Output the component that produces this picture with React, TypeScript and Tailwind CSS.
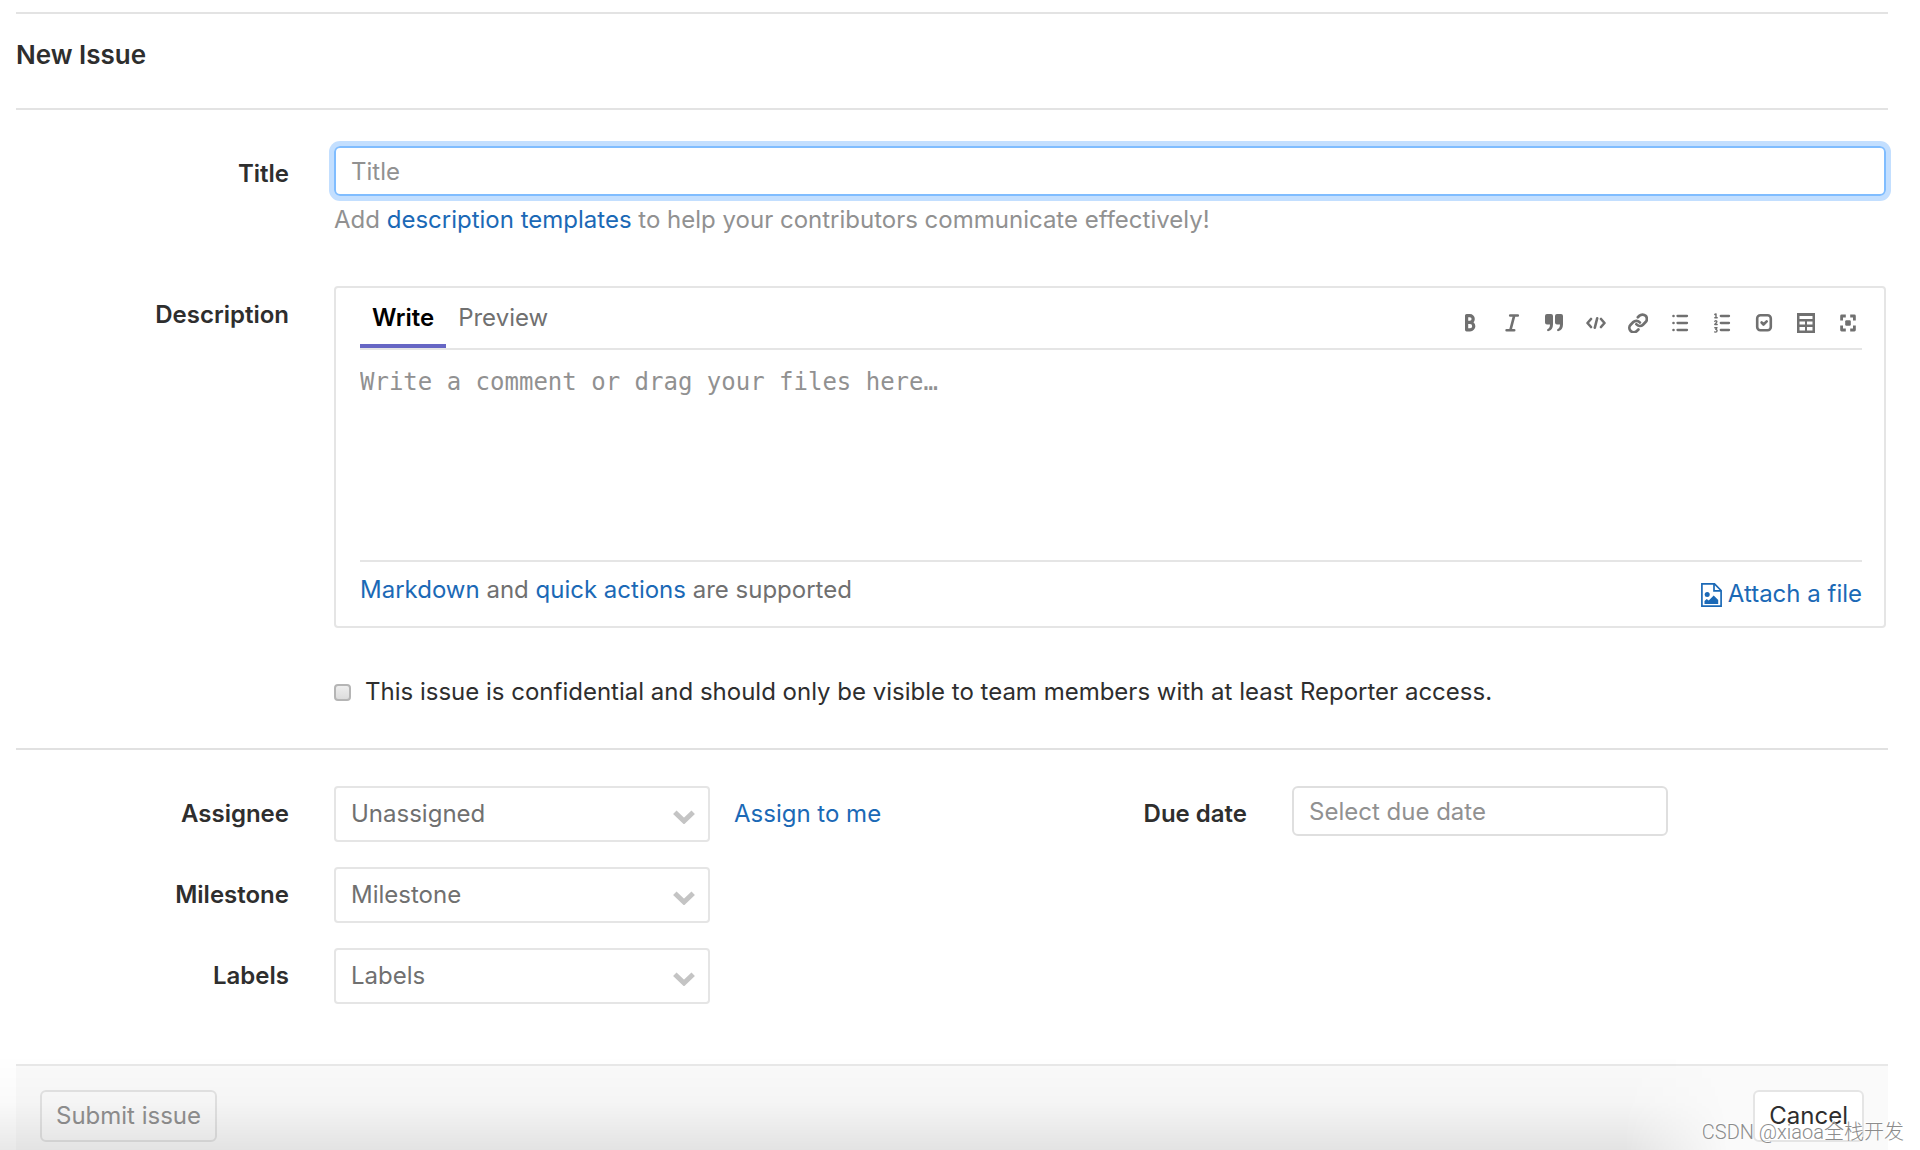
import type { ReactNode } from "react";

const labelClass = "w-[273px] shrink-0 text-right font-semibold text-[#2e2e2e]";
const linkClass = "text-[#1b69b6] hover:underline";

const stroke = {
  fill: "none",
  stroke: "currentColor",
  strokeLinecap: "round" as const,
  strokeLinejoin: "round" as const,
};

const tools: { name: string; icon: ReactNode }[] = [
  {
    name: "Add bold text",
    icon: <path {...stroke} strokeWidth="3.200" d="M6.600 2.600h3.200a3.300 3.300 0 0 1 0 6.800H6.600zM6.600 9.500h3.500a3.600 3.600 0 0 1 0 7.300H6.600z" />,
  },
  {
    name: "Add italic text",
    icon: <path {...stroke} strokeWidth="2.600" d="M8.200 2.500h7.600M4.600 17.300h7.600M12.200 2.600 8.400 17.200" />,
  },
  {
    name: "Insert a quote",
    icon: (
      <g fill="currentColor">
        <path d="M3 1h4a2 2 0 0 1 2 2v8.500c0 3.600-1.800 5.900-4.300 6.600-1.600.4-2.300-1.500-.9-2.200C5.300 15.200 6 13.800 6 11.500H3a2 2 0 0 1-2-2V3a2 2 0 0 1 2-2z" />
        <path d="M13 1h4a2 2 0 0 1 2 2v8.500c0 3.600-1.800 5.900-4.300 6.600-1.600.4-2.300-1.500-.9-2.200 1.500-.7 2.200-2.100 2.200-4.400h-3a2 2 0 0 1-2-2V3a2 2 0 0 1 2-2z" />
      </g>
    ),
  },
  {
    name: "Insert code",
    icon: <path {...stroke} strokeWidth="2.600" d="M5 6 1.500 10 5 14M15 6l3.500 4-3.500 4M11.200 5.300 8.800 14.700" />,
  },
  {
    name: "Add a link",
    icon: (
      <g {...stroke} strokeWidth="3.100" transform="translate(-0.6 -0.6) scale(0.88) translate(0.6 0.6)">
        <path d="M9.600 12.900a5 5 0 0 0 7.500.5l3-3a5 5 0 0 0-7.100-7.100l-1.700 1.700" />
        <path d="M13.600 10.900a5 5 0 0 0-7.500-.5l-3 3a5 5 0 0 0 7.100 7.100l1.700-1.700" />
      </g>
    ),
  },
  {
    name: "Add a bullet list",
    icon: (
      <g {...stroke} strokeWidth="2.300">
        <path d="M7.500 3h9.500M7.500 10h9.500M7.500 17h9.500" />
        <path d="M3.500 3h.01M3.500 10h.01M3.500 17h.01" strokeWidth="2.600" />
      </g>
    ),
  },
  {
    name: "Add a numbered list",
    icon: (
      <g {...stroke} strokeWidth="2.300">
        <path d="M8.800 3h8.200M8.800 10h8.200M8.800 17h8.200" />
        <path
          strokeWidth="1.400"
          d="M2.800 1.500 4 .9v3.800M2.800 4.700h2.400M2.800 8.200c1-.8 2.300-.3 2 .7-.2.800-1.300 1.500-2 2.600h2.400M2.800 14.700h2.200l-1.200 1.700c1.700 0 1.700 2.700-.2 2.700l-.9-.2"
        />
      </g>
    ),
  },
  {
    name: "Add a task list",
    icon: (
      <g {...stroke}>
        <rect x="3.200" y="2.200" width="13.600" height="15" rx="3.200" strokeWidth="2.600" />
        <path d="m7.600 9.500 1.900 2 3.200-3.200" strokeWidth="2.600" />
      </g>
    ),
  },
  {
    name: "Add a table",
    icon: (
      <path
        fill="currentColor"
        fillRule="evenodd"
        d="M1 0h18v20H1zM3.500 3v3h13V3zM3.500 8.500v3H9v-3zM11 8.500v3h5.500v-3zM3.500 14v3.500H9V14zM11 14v3.500h5.500V14z"
      />
    ),
  },
  {
    name: "Go full screen",
    icon: (
      <g>
        <path
          {...stroke}
          strokeLinecap="butt"
          strokeWidth="2.800"
          d="M3.600 7.500V3h4.200M12.200 3h4.200v4.500M16.400 12.500V17h-4.200M7.800 17H3.600v-4.500"
        />
        <rect x="7.200" y="7.200" width="5.600" height="5.600" rx="1.200" fill="currentColor" />
      </g>
    ),
  },
];

function Row({ label, htmlFor, children }: { label: string; htmlFor: string; children: ReactNode }) {
  return (
    <div className="flex items-center gap-[45px]">
      <label htmlFor={htmlFor} className={labelClass}>
        {label}
      </label>
      <div className="flex min-w-0 flex-1 items-center gap-6">{children}</div>
    </div>
  );
}

function Dropdown({ id, value }: { id: string; value: string }) {
  return (
    <div className="relative w-[376px]">
      <select
        id={id}
        className="h-14 w-full appearance-none rounded border-2 border-[#e5e5e5] bg-white px-[15px] pr-12 text-[#707070]"
      >
        <option>{value}</option>
      </select>
      <svg
        viewBox="0 0 22 14"
        className="pointer-events-none absolute top-6 right-[15px] h-[14px] w-[22px] text-[#c4c4c4]"
        aria-hidden="true"
      >
        <path d="M1.800 2.300 11 11 20.200 2.300" fill="none" stroke="currentColor" strokeWidth="5" />
      </svg>
    </div>
  );
}

export default function App() {
  return (
    <div className="relative bg-white font-['Inter',sans-serif] text-[24px] leading-8 text-[#2e2e2e]">
      <form className="pt-3 pr-8 pl-4" onSubmit={(e) => e.preventDefault()}>
        <header className="border-y-2 border-[#e3e3e3] pt-[25px] pb-[37px]">
          <h1 className="text-[26px] leading-8 font-semibold">New Issue</h1>
        </header>

        <div className="mt-9 flex items-start gap-[45px] pr-0.5">
          <label htmlFor="title" className={labelClass + " pt-3"}>
            Title
          </label>
          <div className="min-w-0 flex-1">
            <input
              id="title"
              type="text"
              placeholder="Title"
              className="block h-[50px] w-full rounded-md border-2 border-[#80bdff] px-[15px] ring-[5px] ring-[#c3dfff] outline-none placeholder:text-[#919191]"
            />
            <p className="mt-2 text-[#919191]">
              Add{" "}
              <a href="#templates" className={linkClass}>
                description templates
              </a>{" "}
              to help your contributors communicate effectively!
            </p>
          </div>
        </div>

        <div className="mt-[50px] flex items-start gap-[45px] pr-0.5">
          <label htmlFor="description" className={labelClass + " pt-[13px]"}>
            Description
          </label>
          <div className="min-w-0 flex-1">
            <div className="rounded border-2 border-[#e5e5e5] pr-[22px] pl-6">
              <div className="flex justify-between border-b-2 border-[#e5e5e5]">
                <div className="flex h-[60px]" role="tablist">
                  <button
                    type="button"
                    role="tab"
                    aria-selected="true"
                    className="border-b-4 border-[#6666c4] px-3 pt-1 font-semibold text-black"
                  >
                    Write
                  </button>
                  <button
                    type="button"
                    role="tab"
                    aria-selected="false"
                    className="border-b-4 border-transparent px-3 pt-1 text-[#707070]"
                  >
                    Preview
                  </button>
                </div>
                <div className="mr-1 flex items-center gap-[22px] pt-2.5 text-[#707070]">
                  {tools.map((tool) => (
                    <button key={tool.name} type="button" aria-label={tool.name}>
                      <svg viewBox="0 0 20 20" className="size-5" aria-hidden="true">
                        {tool.icon}
                      </svg>
                    </button>
                  ))}
                </div>
              </div>
              <textarea
                id="description"
                placeholder="Write a comment or drag your files here…"
                className="block h-[210px] w-full resize-none pt-4 font-['DejaVu_Sans_Mono',monospace] text-[24px] leading-8 outline-none placeholder:text-[#919191]"
              />
              <div className="flex h-[66px] items-start justify-between border-t-2 border-[#e5e5e5]">
                <p className="pt-3 text-[#707070]">
                  <a href="#markdown" className={linkClass}>
                    Markdown
                  </a>{" "}
                  and{" "}
                  <a href="#quick-actions" className={linkClass}>
                    quick actions
                  </a>{" "}
                  are supported
                </p>
                <button type="button" className="flex items-end gap-1.5 pt-4 text-[#1b69b6]">
                  <svg viewBox="0 0 21 24" className="mb-[3px] h-6 w-[21px]" aria-hidden="true">
                    <path
                      d="M.9.900h12.600L20.100 7.500v15.600H.900zM13 .9v7h7"
                      fill="none"
                      stroke="currentColor"
                      strokeWidth="1.700"
                    />
                    <circle cx="6.200" cy="11.500" r="2.500" fill="currentColor" />
                    <path d="M3.500 21v-3l2.200-2 2 1.500 5-5L17.200 17v4z" fill="currentColor" />
                  </svg>
                  Attach a file
                </button>
              </div>
            </div>

            <div className="mt-12 flex items-center gap-3.5">
              <input
                id="confidential"
                type="checkbox"
                className="size-[17px] appearance-none rounded-[4px] border-2 border-[#b5b5b5] bg-linear-to-b from-[#eeeeee] to-[#dcdcdc]"
              />
              <label htmlFor="confidential">
                This issue is confidential and should only be visible to team members with at least Reporter access.
              </label>
            </div>
          </div>
        </div>

        <hr className="mt-10 border-t-2 border-[#e1e1e1]" />

        <div className="mt-9 grid grid-cols-2 gap-11">
          <div className="flex flex-col gap-[25px]">
            <Row label="Assignee" htmlFor="assignee">
              <Dropdown id="assignee" value="Unassigned" />
              <a href="#assign" className={linkClass}>
                Assign to me
              </a>
            </Row>
            <Row label="Milestone" htmlFor="milestone">
              <Dropdown id="milestone" value="Milestone" />
            </Row>
            <Row label="Labels" htmlFor="labels">
              <Dropdown id="labels" value="Labels" />
            </Row>
          </div>
          <div className="flex items-start gap-[45px]">
            <label htmlFor="due-date" className={labelClass + " pt-3"}>
              Due date
            </label>
            <input
              id="due-date"
              type="text"
              placeholder="Select due date"
              className="h-[50px] w-[376px] rounded-md border-2 border-[#dfdfdf] px-[15px] outline-none placeholder:text-[#919191]"
            />
          </div>
        </div>

        <footer className="mt-15 flex justify-between border-t-2 border-[#e8e8e8] bg-[#fafafa] px-6 pt-6 pb-2">
          <button
            type="submit"
            disabled
            className="h-[52px] rounded-md border-2 border-[#e3e3e3] bg-[#fafafa] px-3.5 text-[#919191]"
          >
            Submit issue
          </button>
          <button type="button" className="h-[52px] rounded-md border-2 border-[#e5e5e5] bg-white px-3.5">
            Cancel
          </button>
        </footer>
      </form>

      <div className="pointer-events-none absolute bottom-0 left-0 h-24 w-[90%] bg-linear-to-b from-black/0 via-black/2 to-black/9 mask-r-from-94% mask-r-to-100%" />
      <div className="pointer-events-none absolute right-4 bottom-0 font-['Roboto','Noto_Sans_CJK_SC',sans-serif] text-[20px] leading-9 font-light text-[#8c8c8c] [text-shadow:-1px_-1px_0_white]">
        CSDN @xiaoa全栈开发
      </div>
    </div>
  );
}
